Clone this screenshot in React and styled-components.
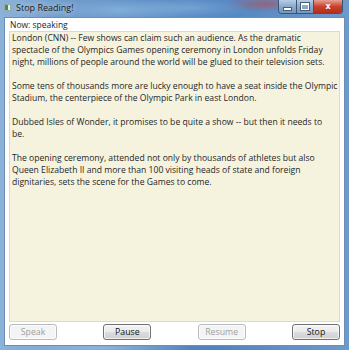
import React from "react";
import styled, { createGlobalStyle } from "styled-components";

const GlobalStyle = createGlobalStyle`
  html, body {
    margin: 0;
    padding: 0;
    background: #ffffff;
  }
  body {
    font-family: "Open Sans", "Noto Sans", sans-serif;
  }
`;

const Window = styled.div`
  width: 349px;
  height: 350px;
  box-sizing: border-box;
  display: flex;
  flex-direction: column;
  padding: 0 4px 4px 4px;
  background:
    radial-gradient(ellipse 70px 14px at 120px 10px, rgba(160, 200, 235, 0.55), transparent),
    radial-gradient(ellipse 60px 12px at 190px 8px, rgba(150, 190, 230, 0.5), transparent),
    radial-gradient(ellipse 40px 8px at 265px 4px, rgba(200, 60, 60, 0.5), transparent),
    radial-gradient(ellipse 90px 6px at 100px 348px, rgba(170, 210, 240, 0.6), transparent),
    linear-gradient(90deg, #8bb2d9 0%, #5f8fc4 30%, #4f83bf 60%, #6d9acb 100%);
`;

const TitleBar = styled.div`
  height: 17px;
  display: flex;
  align-items: flex-start;
  flex-shrink: 0;
`;

const AppIcon = styled.div`
  width: 7px;
  height: 7px;
  margin: 4px 5px 0 0;
  background: linear-gradient(90deg, #2f9a4a 0 3px, #e8eef0 3px);
  border: 1px solid #9aa8b0;
  box-sizing: border-box;
`;

const Title = styled.span`
  font-family: "Open Sans", "Noto Sans", sans-serif;
  font-size: 9px;
  line-height: 15px;
  color: #1b1b1b;
  text-shadow: 0 0 6px rgba(255, 255, 255, 0.9);
`;

const Captions = styled.div`
  margin-left: auto;
  margin-right: 2px;
  display: flex;
  height: 13px;
  border: 1px solid #3a5676;
  border-top: none;
  border-radius: 0 0 4px 4px;
  overflow: hidden;
`;

const CaptionButton = styled.div`
  width: ${p => p.$w}px;
  display: flex;
  align-items: center;
  justify-content: center;
  background: ${p =>
    p.$close
      ? "linear-gradient(#e8a193, #c7432f 50%, #b82d17)"
      : "linear-gradient(#b7cde6, #8aa9cc 50%, #7497c0)"};
  border-left: ${p => (p.$first ? "none" : "1px solid #3a5676")};
  color: #ffffff;
  font-family: "DejaVu Sans", sans-serif;
  font-size: 8px;
  font-weight: bold;
`;

const MinGlyph = styled.div`
  width: 7px;
  height: 2px;
  margin-top: 4px;
  background: #fff;
  border: 1px solid #4a5d72;
`;

const MaxGlyph = styled.div`
  width: 6px;
  height: 4px;
  border: 1px solid #fff;
  border-top-width: 2px;
  outline: 1px solid #4a5d72;
`;

const Client = styled.div`
  flex: 1;
  background: #ffffff;
  border: 1px solid #6d8fb5;
  display: flex;
  flex-direction: column;
  padding: 0 4px 5px 4px;
`;

const Status = styled.div`
  font-family: "Open Sans", "Noto Sans", sans-serif;
  font-size: 8.5px;
  line-height: 13px;
  color: #1e1e1e;
  padding-left: 1px;
`;

const TextBox = styled.div`
  flex: 1;
  background: #f5f3de;
  border: 1px solid #dcdbcb;
  padding: 0 2px;
  font-family: "Open Sans", "Noto Sans", sans-serif;
  font-size: 8.6px;
  line-height: 12px;
  color: #262626;
`;

const Paragraph = styled.p`
  margin: 0 0 12px 0;
  white-space: nowrap;
`;

const Line = styled.span`
  display: block;
`;

const ButtonRow = styled.div`
  display: flex;
  justify-content: space-between;
  margin-top: 2px;
`;

const Button = styled.button`
  width: 48px;
  height: 16px;
  padding: 0;
  border-radius: 3px;
  font-family: "Open Sans", "Noto Sans", sans-serif;
  font-size: 8.75px;
  border: 1px solid ${p => (p.disabled ? "#b8bcbf" : "#707070")};
  color: ${p => (p.disabled ? "#a0a0a0" : "#111111")};
  background: ${p =>
    p.disabled
      ? "#f4f4f4"
      : "linear-gradient(#f3f3f3 0%, #ebebeb 50%, #dddddd 51%, #cfcfcf 100%)"};
  box-shadow: inset 0 0 0 1px rgba(255, 255, 255, 0.7);
`;

const paragraphs = [
  [
    "London (CNN) -- Few shows can claim such an audience. As the dramatic",
    "spectacle of the Olympics Games opening ceremony in London unfolds Friday",
    "night, millions of people around the world will be glued to their television sets.",
  ],
  [
    "Some tens of thousands more are lucky enough to have a seat inside the Olympic",
    "Stadium, the centerpiece of the Olympic Park in east London.",
  ],
  [
    "Dubbed Isles of Wonder, it promises to be quite a show -- but then it needs to",
    "be.",
  ],
  [
    "The opening ceremony, attended not only by thousands of athletes but also",
    "Queen Elizabeth II and more than 100 visiting heads of state and foreign",
    "dignitaries, sets the scene for the Games to come.",
  ],
];

export default function App() {
  return (
    <>
      <GlobalStyle />
      <Window>
        <TitleBar>
          <AppIcon />
          <Title>Stop Reading!</Title>
          <Captions>
            <CaptionButton $w={17} $first>
              <MinGlyph />
            </CaptionButton>
            <CaptionButton $w={16}>
              <MaxGlyph />
            </CaptionButton>
            <CaptionButton $w={28} $close>
              x
            </CaptionButton>
          </Captions>
        </TitleBar>
        <Client>
          <Status>Now: speaking</Status>
          <TextBox>
            {paragraphs.map((lines, i) => (
              <Paragraph key={i}>
                {lines.map((l, j) => (
                  <Line key={j}>{l}</Line>
                ))}
              </Paragraph>
            ))}
          </TextBox>
          <ButtonRow>
            <Button disabled>Speak</Button>
            <Button>Pause</Button>
            <Button disabled>Resume</Button>
            <Button>Stop</Button>
          </ButtonRow>
        </Client>
      </Window>
    </>
  );
}
